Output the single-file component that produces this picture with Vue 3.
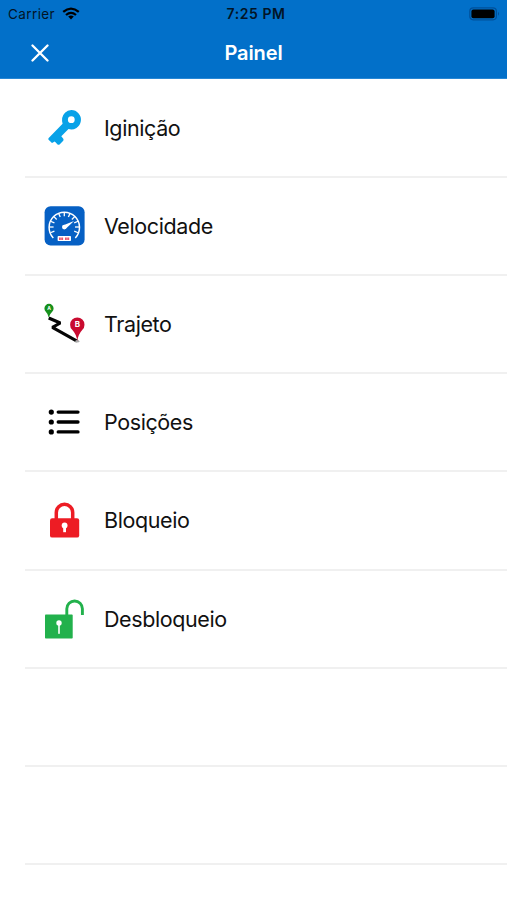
<script setup>
const items = [
  { id: 'key', label: 'Iginição' },
  { id: 'speed', label: 'Velocidade' },
  { id: 'route', label: 'Trajeto' },
  { id: 'list', label: 'Posições' },
  { id: 'lock', label: 'Bloqueio' },
  { id: 'unlock', label: 'Desbloqueio' },
  { id: 'empty-1', label: '' },
  { id: 'empty-2', label: '' },
]

// Gauge tick marks, every 22.5 degrees round the dial
const ticks = Array.from({ length: 11 }, (_, i) => -112.5 + i * 22.5)
</script>

<template>
  <main class="screen">
    <header class="header">
      <div class="status">
        <div class="carrier">
          <span>Carrier</span>
          <svg class="wifi" width="18" height="13" viewBox="0 0 18 13">
            <g fill="none" stroke="#000" stroke-width="2.3">
              <path d="M1.2 4.9Q9-1.7 16.8 4.9" />
              <path d="M4 8Q9 3.7 14 8" />
            </g>
            <path d="M6.2 9.6Q9 7.4 11.8 9.6L9 12.5Z" fill="#000" />
          </svg>
        </div>
        <time class="time">7:25 PM</time>
        <svg class="battery" width="32" height="14" viewBox="0 0 32 14">
          <rect x="0.8" y="0.8" width="26.6" height="12" rx="3.5" fill="none" stroke="#00509a" stroke-width="1.2" />
          <rect x="2.4" y="2.4" width="23.2" height="8.8" rx="2" fill="#000" />
          <path d="M29 4.8Q31 6.8 29 8.8Z" fill="#00509a" />
        </svg>
      </div>
      <nav class="nav">
        <button class="close" aria-label="Fechar">
          <svg width="18" height="18" viewBox="0 0 18 18">
            <path d="M1.5 1.5L16.5 16.5M16.5 1.5L1.5 16.5" stroke="#fff" stroke-width="2.3" stroke-linecap="round" />
          </svg>
        </button>
        <h1 class="title">Painel</h1>
      </nav>
    </header>

    <ul class="list">
      <li v-for="item in items" :key="item.id" class="row">
        <template v-if="item.label">
          <svg class="icon" viewBox="0 0 48 48">
            <g v-if="item.id === 'key'" fill="#08a2e8">
              <path fill-rule="evenodd" d="M31.3 6A9.7 9.7 0 1 1 28.5 25L21.3 32.3L23.3 34.8Q24.1 36 23 37.1L19.8 40.3Q18.6 41.4 17.3 40.2L14.8 37.6L12 39L8.6 35.7Q7.8 34.8 8.7 33.9L22.6 19.8Q20.8 13 25 8.8Q27.6 6.1 31.3 6ZM31.3 12.3A3.4 3.4 0 1 0 31.3 19.1A3.4 3.4 0 1 0 31.3 12.3Z" />
            </g>

            <g v-else-if="item.id === 'speed'">
              <rect x="4.6" y="4.2" width="40" height="39.3" rx="6" fill="#0660c4" />
              <path d="M13.3 35.9A15.2 15.2 0 1 1 35.3 35.9" fill="none" stroke="#fff" stroke-width="1.5" />
              <path v-for="angle in ticks" :key="angle" d="M24.3 10V14.3" :transform="`rotate(${angle} 24.3 25)`" stroke="#fff" stroke-width="1.3" />
              <path d="M23.4 23.3L34 19.1L25.5 26.9Z" fill="#fff" />
              <circle cx="24.3" cy="25.1" r="2.3" fill="#fff" />
              <rect x="17.6" y="34.1" width="13.4" height="5" rx="0.8" fill="#fff" />
              <path d="M19 36.7H23.5M25 36.7H29.6" stroke="#e8566d" stroke-width="2.4" stroke-dasharray="1.8 0.4" />
            </g>

            <g v-else-if="item.id === 'route'">
              <path d="M8.7 18L20.3 23L12.4 27.3L37 41.2" fill="none" stroke="#050505" stroke-width="3.1" stroke-linejoin="bevel" />
              <path d="M8.7 17.5Q8.3 14.2 5.8 11.7A4.6 4.6 0 1 1 12.2 11.7Q9.5 14.2 8.7 17.5Z" fill="#16901c" />
              <text class="mark mark-a" x="9" y="10.4">A</text>
              <ellipse cx="37.3" cy="41.2" rx="2" ry="1.3" fill="#aaa" />
              <path d="M37.3 41Q36.5 34.5 32.2 29.8A7.2 7.2 0 1 1 42.4 29.8Q38.1 34.5 37.3 41Z" fill="#c90b30" />
              <text class="mark mark-b" x="37.3" y="27.3">B</text>
            </g>

            <g v-else-if="item.id === 'list'">
              <g v-for="y in [14.1, 24, 33.9]" :key="y">
                <circle cx="11.3" :cy="y" r="2.6" />
                <path :d="`M18.2 ${y}H38`" stroke="#000" stroke-width="3.3" stroke-linecap="round" />
              </g>
            </g>

            <g v-else-if="item.id === 'lock'">
              <path d="M16.3 23V16.5A8.2 8.2 0 0 1 32.7 16.5V23" fill="none" stroke="#ed1c24" stroke-width="3.5" />
              <rect x="10" y="22.2" width="29.2" height="19.4" rx="2.2" fill="#ed1c24" />
              <circle cx="24.6" cy="29.5" r="2.9" fill="#fff" />
              <path d="M23.2 30H26V36.2H23.2Z" fill="#fff" />
            </g>

            <g v-else>
              <path d="M26.8 20V13.8A7.8 7.8 0 0 1 42.4 13.8V20" fill="none" stroke="#22b14c" stroke-width="2.9" />
              <rect x="5" y="19.6" width="27.7" height="24" rx="0.8" fill="#22b14c" />
              <circle cx="19" cy="28" r="2.7" fill="#fff" />
              <path d="M19 28V38.2" stroke="#fff" stroke-width="1.6" stroke-linecap="round" />
            </g>
          </svg>
          <span class="label">{{ item.label }}</span>
        </template>
      </li>
    </ul>
  </main>
</template>

<style>
body {
  margin: 0;
  background: #fff;
}
</style>

<style scoped>
.screen {
  height: 900px;
  overflow: hidden;
  background: #fff;
  font-family: Inter, "Liberation Sans", sans-serif;
  color: #111;
}

.header {
  box-sizing: border-box;
  height: 79px;
  background: #0270c9;
  border-bottom: 1px solid #2787d5;
}

.status {
  display: grid;
  grid-template-columns: 1fr auto 1fr;
  align-items: center;
  height: 27px;
  padding: 0 3px 0 8px;
  font-size: 13.5px;
  color: #021426;
}

.carrier {
  display: flex;
  align-items: center;
  gap: 7px;
  letter-spacing: 0.4px;
}

.wifi {
  display: block;
}

.time {
  font-size: 14px;
  font-weight: 600;
  letter-spacing: 0.55px;
}

.battery {
  justify-self: end;
  margin-right: 3px;
}

.nav {
  display: grid;
  grid-template-columns: 1fr auto 1fr;
  align-items: center;
  height: 51px;
}

.close {
  display: flex;
  justify-self: start;
  margin: 0 0 0 31px;
  padding: 0;
  border: 0;
  background: none;
}

.title {
  margin: 0;
  font-size: 20px;
  font-weight: 600;
  letter-spacing: -0.1px;
  color: #fff;
}

.list {
  margin: 0;
  padding: 0.8px 0 0 25px;
  list-style: none;
}

.row {
  display: flex;
  align-items: center;
  box-sizing: border-box;
  height: 98.15px;
  padding-left: 15px;
  border-bottom: 2px solid #f0f0f0;
}

.icon {
  width: 48px;
  height: 48px;
  margin-right: 16px;
}

.label {
  font-size: 21.5px;
  letter-spacing: -0.4px;
}

.mark {
  fill: #fff;
  font-weight: 700;
  text-anchor: middle;
}

.mark-a {
  font-size: 5px;
}

.mark-b {
  font-size: 8px;
}
</style>
